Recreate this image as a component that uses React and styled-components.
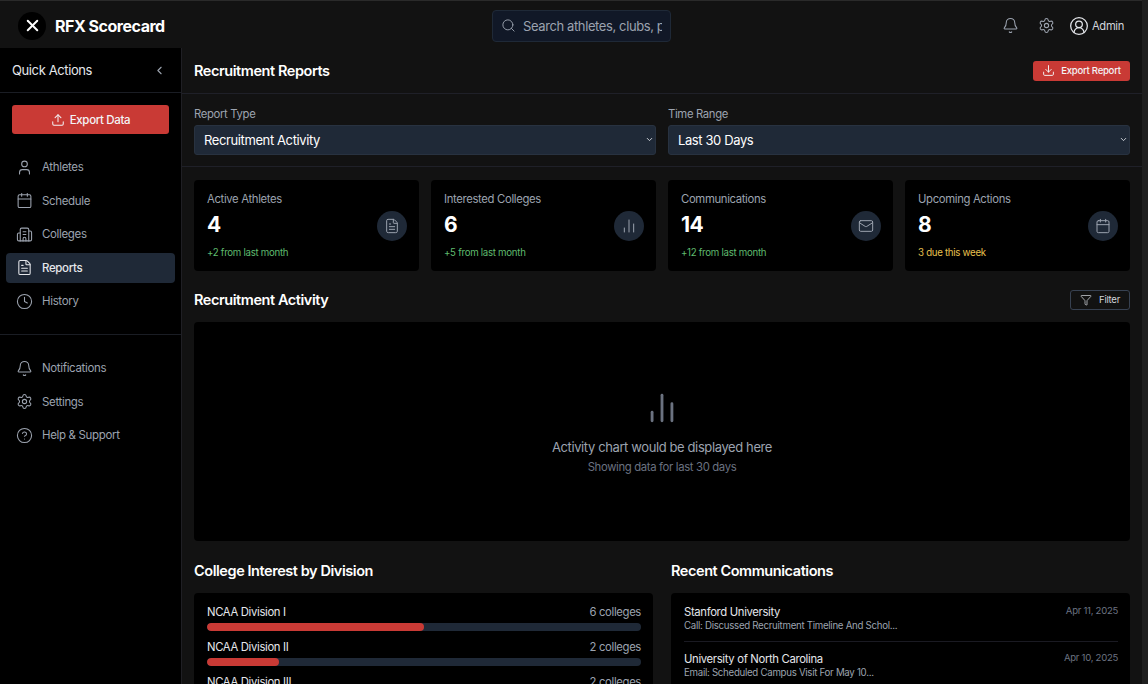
import React from 'react';
import styled, { createGlobalStyle } from 'styled-components';
import {
    X, Search, Bell, Settings, CircleUserRound, ChevronLeft, ChevronDown, Upload, Download, User, Calendar,
    Building2, FileText, Clock, CircleHelp, ChartNoAxesColumn, Mail, Filter
} from 'lucide-react';

const GlobalStyle = createGlobalStyle`
    html, body {
        margin: 0;
        height: 100%;
        background: #121212;
        font-family: Inter, "Liberation Sans", sans-serif;
        color: #fff;
        overflow: hidden;
    }
    * {
        box-sizing: border-box;
        letter-spacing: -0.03em;
    }
`;

const Page = styled.div`
    width: 1148px;
    height: 684px;
    display: flex;
    overflow: hidden;
`;

const Shell = styled.div`
    width: 1142px;
    display: flex;
    flex-direction: column;
    border-top: 1px solid #2a2a2a;
`;

const ScrollTrack = styled.div`
    width: 6px;
    background: #1f1f1f;
`;

const Header = styled.header`
    height: 47px;
    flex-shrink: 0;
    display: flex;
    align-items: center;
    padding: 2px 18px 0;
`;

const Brand = styled.div`
    flex: 0 0 474px;
    display: flex;
    align-items: center;
    gap: 9px;
`;

const CloseButton = styled.div`
    width: 28px;
    height: 28px;
    border-radius: 50%;
    background: #000;
    display: flex;
    align-items: center;
    justify-content: center;
`;

const BrandName = styled.div`
    font-size: 16px;
    font-weight: 700;
`;

const SearchBox = styled.div`
    width: 179px;
    height: 32px;
    display: flex;
    align-items: center;
    gap: 7px;
    padding: 0 8px;
    background: #111827;
    border: 1px solid #1f2937;
    border-radius: 4px;
    color: #9ca3af;
`;

const SearchInput = styled.input`
    flex: 1;
    min-width: 0;
    padding: 0;
    background: none;
    border: 0;
    outline: 0;
    font: 400 13px Inter, sans-serif;
    color: #9ca3af;
    &::placeholder { color: #9ca3af; opacity: 1; }
`;

const HeaderTools = styled.div`
    margin-left: auto;
    display: flex;
    align-items: center;
    color: #9ca3af;
`;

const ToolIcon = styled.div`
    display: flex;
    margin-right: ${p => p.$gap}px;
`;

const AdminChip = styled.div`
    display: flex;
    align-items: center;
    gap: 2.5px;
    font-size: 11.2px;
    color: #d1d5db;
    svg { color: #e5e7eb; }
`;

const Body = styled.div`
    flex: 1;
    min-height: 0;
    display: flex;
`;

const Sidebar = styled.aside`
    width: 182px;
    flex-shrink: 0;
    background: #000;
    border-right: 1px solid #1f1f24;
`;

const QuickHead = styled.div`
    height: 45px;
    display: flex;
    align-items: center;
    justify-content: space-between;
    padding: 0 15px 0 12px;
    border-bottom: 1px solid #1a1d24;
    font-size: 13px;
    color: #e5e7eb;
    svg { color: #9ca3af; }
`;

const ExportData = styled.button`
    width: 157px;
    height: 29px;
    margin: 12px 12px 18px;
    display: flex;
    align-items: center;
    justify-content: center;
    gap: 5px;
    background: #c93a35;
    border: 0;
    border-radius: 3px;
    font: 500 11.5px Inter, sans-serif;
    color: #f3f4f6;
`;

const Nav = styled.nav`
    display: flex;
    flex-direction: column;
    gap: 3.5px;
    padding: 0 6px;
`;

const NavItem = styled.div`
    height: 30px;
    display: flex;
    align-items: center;
    gap: 9px;
    padding: 0 10px;
    border-radius: 4px;
    font-size: 11.5px;
    font-weight: ${p => (p.$active ? 500 : 400)};
    color: ${p => (p.$active ? '#e5e7eb' : '#9ca3af')};
    background: ${p => (p.$active ? '#1f2937' : 'transparent')};
`;

const SideDivider = styled.div`
    height: 1px;
    margin: 18px 0;
    background: #1a1d24;
`;

const Main = styled.main`
    flex: 1;
    min-width: 0;
    overflow: hidden;
`;

const TitleBar = styled.div`
    height: 46px;
    display: flex;
    align-items: center;
    justify-content: space-between;
    padding: 0 12px;
    border-bottom: 1px solid #1f2028;
`;

const PageTitle = styled.h1`
    margin: 0;
    font-size: 14.5px;
    font-weight: 600;
`;

const ExportReport = styled.button`
    width: 97px;
    height: 20px;
    display: flex;
    align-items: center;
    justify-content: center;
    gap: 6px;
    padding: 0;
    background: #c93a35;
    border: 0;
    border-radius: 3px;
    font: 500 9.6px Inter, sans-serif;
    color: #f3f4f6;
`;

const Filters = styled.div`
    height: 73px;
    display: grid;
    grid-template-columns: 1fr 1fr;
    gap: 12px;
    padding: 13px 12px 0;
    border-bottom: 1px solid #1f2028;
`;

const FieldLabel = styled.label`
    display: block;
    margin-bottom: 4px;
    font-size: 11.3px;
    line-height: 14px;
    color: #9ca3af;
`;

const SelectWrap = styled.div`
    position: relative;
    color: #d1d5db;
    svg {
        position: absolute;
        right: 2px;
        top: 10px;
        pointer-events: none;
    }
`;

const Select = styled.select`
    width: 100%;
    height: 30px;
    padding: 0 9px;
    appearance: none;
    background: #1f2937;
    border: 1px solid #283240;
    border-radius: 3px;
    font: 400 13px Inter, sans-serif;
    color: #fff;
`;

const Stats = styled.div`
    display: grid;
    grid-template-columns: repeat(4, 1fr);
    gap: 12px;
    padding: 13px 12px 0;
`;

const StatCard = styled.div`
    height: 91px;
    display: flex;
    align-items: center;
    justify-content: space-between;
    padding: 0 12px 0 13px;
    background: #000;
    border-radius: 4px;
`;

const StatLabel = styled.div`
    font-size: 11.3px;
    line-height: 14px;
    color: #9ca3af;
`;

const StatValue = styled.div`
    margin: 6px 0 9px;
    font-size: 21px;
    line-height: 26px;
    font-weight: 700;
`;

const StatNote = styled.div`
    font-size: 9.7px;
    line-height: 12px;
    color: ${p => (p.$warn ? '#e8c14f' : '#5fbb6e')};
`;

const StatIcon = styled.div`
    width: 30px;
    height: 30px;
    border-radius: 50%;
    background: #1f2937;
    display: flex;
    align-items: center;
    justify-content: center;
    color: #9ca3af;
`;

const SectionHead = styled.div`
    height: 51px;
    display: flex;
    align-items: center;
    justify-content: space-between;
    padding: 6px 12px 0;
`;

const SectionTitle = styled.h2`
    margin: 0;
    font-size: 14.5px;
    font-weight: 600;
`;

const FilterButton = styled.button`
    width: 60px;
    height: 20px;
    display: flex;
    align-items: center;
    justify-content: center;
    gap: 7px;
    padding: 0;
    background: none;
    border: 1px solid #374151;
    border-radius: 3px;
    font: 400 9.6px Inter, sans-serif;
    color: #d1d5db;
`;

const ChartPanel = styled.div`
    height: 219px;
    margin: 0 12px;
    padding-top: 3px;
    display: flex;
    flex-direction: column;
    align-items: center;
    justify-content: center;
    background: #000;
    border-radius: 4px;
    color: #6b7280;
`;

const ChartText = styled.div`
    margin-top: 12px;
    font-size: 13px;
    line-height: 20px;
    color: #9ca3af;
`;

const ChartSub = styled.div`
    margin-top: 2px;
    font-size: 11.3px;
    line-height: 16px;
    color: #6b7280;
`;

const Columns = styled.div`
    display: grid;
    grid-template-columns: 1fr 1fr;
    gap: 18px;
    padding: 0 12px;
`;

const ColumnTitle = styled.h2`
    margin: 0;
    height: 52px;
    padding-top: 6px;
    display: flex;
    align-items: center;
    font-size: 14.5px;
    font-weight: 600;
`;

const ListPanel = styled.div`
    height: 160px;
    padding: 12px 12px 12px 13px;
    background: #000;
    border-radius: 4px;
`;

const DivisionRow = styled.div`
    margin-bottom: 9px;
`;

const DivisionHead = styled.div`
    display: flex;
    justify-content: space-between;
    font-size: 11.3px;
    line-height: 15px;
    margin-bottom: 3px;
    color: #e5e7eb;
    span:last-child { color: #9ca3af; }
`;

const Track = styled.div`
    height: 8px;
    border-radius: 4px;
    background: #1f2937;
    overflow: hidden;
`;

const Fill = styled.div`
    height: 100%;
    border-radius: 4px;
    background: #c93a35;
`;

const CommRow = styled.div`
    display: flex;
    justify-content: space-between;
    padding-bottom: 9px;
    margin-bottom: 10px;
    border-bottom: 1px solid #1a1a22;
`;

const CommName = styled.div`
    font-size: 11.3px;
    line-height: 14px;
    color: #e5e7eb;
`;

const CommNote = styled.div`
    margin-top: 1px;
    font-size: 9.7px;
    line-height: 12px;
    color: #9ca3af;
`;

const CommDate = styled.div`
    font-size: 9.6px;
    line-height: 12px;
    color: #6b7280;
`;

const primaryNav = [
    { label: 'Athletes', icon: User },
    { label: 'Schedule', icon: Calendar },
    { label: 'Colleges', icon: Building2 },
    { label: 'Reports', icon: FileText, active: true },
    { label: 'History', icon: Clock }
];

const secondaryNav = [
    { label: 'Notifications', icon: Bell },
    { label: 'Settings', icon: Settings },
    { label: 'Help & Support', icon: CircleHelp }
];

const stats = [
    { label: 'Active Athletes', value: 4, note: '+2 from last month', icon: FileText },
    { label: 'Interested Colleges', value: 6, note: '+5 from last month', icon: ChartNoAxesColumn },
    { label: 'Communications', value: 14, note: '+12 from last month', icon: Mail },
    { label: 'Upcoming Actions', value: 8, note: '3 due this week', icon: Calendar, warn: true }
];

const divisions = [
    { name: 'NCAA Division I', count: 6, pct: 50 },
    { name: 'NCAA Division II', count: 2, pct: 16.7 },
    { name: 'NCAA Division III', count: 2, pct: 16.7 }
];

const comms = [
    { name: 'Stanford University', note: 'Call: Discussed Recruitment Timeline And Schol...', date: 'Apr 11, 2025' },
    { name: 'University of North Carolina', note: 'Email: Scheduled Campus Visit For May 10...', date: 'Apr 10, 2025' }
];

function SideLink({ item }) {
    const Icon = item.icon;
    return (
        <NavItem $active={item.active}>
            <Icon size={17} strokeWidth={1.5} />
            {item.label}
        </NavItem>
    );
}

export default function App() {
    return (
        <Page>
            <GlobalStyle />
            <Shell>
                <Header>
                    <Brand>
                        <CloseButton><X size={19} strokeWidth={2.5} /></CloseButton>
                        <BrandName>RFX Scorecard</BrandName>
                    </Brand>
                    <SearchBox>
                        <Search size={15} strokeWidth={1.5} />
                        <SearchInput placeholder="Search athletes, clubs, players..." />
                    </SearchBox>
                    <HeaderTools>
                        <ToolIcon $gap={19}><Bell size={17} strokeWidth={1.5} /></ToolIcon>
                        <ToolIcon $gap={14}><Settings size={17} strokeWidth={1.5} /></ToolIcon>
                        <AdminChip><CircleUserRound size={20} strokeWidth={1.5} />Admin</AdminChip>
                    </HeaderTools>
                </Header>
                <Body>
                    <Sidebar>
                        <QuickHead>Quick Actions<ChevronLeft size={13} /></QuickHead>
                        <ExportData><Upload size={14} strokeWidth={1.75} />Export Data</ExportData>
                        <Nav>{primaryNav.map(item => <SideLink key={item.label} item={item} />)}</Nav>
                        <SideDivider />
                        <Nav>{secondaryNav.map(item => <SideLink key={item.label} item={item} />)}</Nav>
                    </Sidebar>
                    <Main>
                        <TitleBar>
                            <PageTitle>Recruitment Reports</PageTitle>
                            <ExportReport><Download size={13} strokeWidth={1.75} />Export Report</ExportReport>
                        </TitleBar>
                        <Filters>
                            <div>
                                <FieldLabel>Report Type</FieldLabel>
                                <SelectWrap>
                                    <Select defaultValue="activity">
                                        <option value="activity">Recruitment Activity</option>
                                    </Select>
                                    <ChevronDown size={9} strokeWidth={2.5} />
                                </SelectWrap>
                            </div>
                            <div>
                                <FieldLabel>Time Range</FieldLabel>
                                <SelectWrap>
                                    <Select defaultValue="30">
                                        <option value="30">Last 30 Days</option>
                                    </Select>
                                    <ChevronDown size={9} strokeWidth={2.5} />
                                </SelectWrap>
                            </div>
                        </Filters>
                        <Stats>
                            {stats.map(s => {
                                const Icon = s.icon;
                                return (
                                    <StatCard key={s.label}>
                                        <div>
                                            <StatLabel>{s.label}</StatLabel>
                                            <StatValue>{s.value}</StatValue>
                                            <StatNote $warn={s.warn}>{s.note}</StatNote>
                                        </div>
                                        <StatIcon><Icon size={16} strokeWidth={1.5} /></StatIcon>
                                    </StatCard>
                                );
                            })}
                        </Stats>
                        <SectionHead>
                            <SectionTitle>Recruitment Activity</SectionTitle>
                            <FilterButton><Filter size={12} strokeWidth={1.5} />Filter</FilterButton>
                        </SectionHead>
                        <ChartPanel>
                            <ChartNoAxesColumn size={34} strokeWidth={2} />
                            <ChartText>Activity chart would be displayed here</ChartText>
                            <ChartSub>Showing data for last 30 days</ChartSub>
                        </ChartPanel>
                        <Columns>
                            <div>
                                <ColumnTitle>College Interest by Division</ColumnTitle>
                                <ListPanel>
                                    {divisions.map(d => (
                                        <DivisionRow key={d.name}>
                                            <DivisionHead>
                                                <span>{d.name}</span>
                                                <span>{d.count} colleges</span>
                                            </DivisionHead>
                                            <Track><Fill style={{ width: `${d.pct}%` }} /></Track>
                                        </DivisionRow>
                                    ))}
                                </ListPanel>
                            </div>
                            <div>
                                <ColumnTitle>Recent Communications</ColumnTitle>
                                <ListPanel>
                                    {comms.map(c => (
                                        <CommRow key={c.name}>
                                            <div>
                                                <CommName>{c.name}</CommName>
                                                <CommNote>{c.note}</CommNote>
                                            </div>
                                            <CommDate>{c.date}</CommDate>
                                        </CommRow>
                                    ))}
                                </ListPanel>
                            </div>
                        </Columns>
                    </Main>
                </Body>
            </Shell>
            <ScrollTrack />
        </Page>
    );
}
